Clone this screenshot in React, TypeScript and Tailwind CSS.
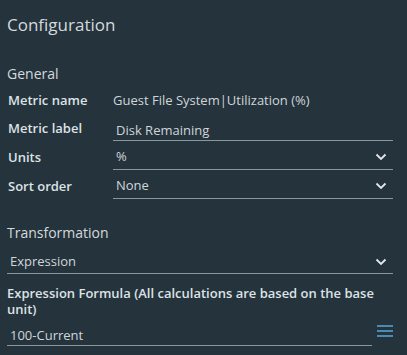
import React from "react";

const Chevron = () => (
    <svg width="12" height="8" viewBox="0 0 12 8" className="text-[#e3e7ea]">
        <path d="M1.5 1.5 L6 6 L10.5 1.5" fill="none" stroke="currentColor" strokeWidth="1.8" />
    </svg>
);

const Row = ({label, children, h = "h-[29px]"}: {label: string; children: React.ReactNode; h?: string}) => (
    <div className={"flex items-center " + h}>
        <div className="w-[105px] shrink-0 text-[13px] font-semibold text-[#dce2e6]">{label}</div>
        {children}
    </div>
);

const SelectBox = ({value, className = ""}: {value: string; className?: string}) => (
    <div className={"flex items-center justify-between h-[24px] border-b border-[#8b959c] pl-[3px] pr-[6px] " + className}>
        <span className="text-[13px] text-[#cfd6db]">{value}</span>
        <Chevron />
    </div>
);

const App = () => {
    return (
        <div
            className="w-[407px] h-[355px] bg-[#25333c] text-[#cfd6db] overflow-hidden pl-[7px] pr-[14px]"
            style={{fontFamily: '"Open Sans", "Liberation Sans", sans-serif'}}
        >
            <h1 className="pt-[13px] text-[17px] leading-[24px] text-[#d3dade]">Configuration</h1>

            <h2 className="mt-[27px] text-[14px] leading-[20px] text-[#d3dade]">General</h2>

            <div className="mt-[3px] pl-[1px]">
                <Row label="Metric name" h="h-[27px]">
                    <span className="text-[13px] text-[#cfd6db]">Guest File System|Utilization (%)</span>
                </Row>
                <Row label="Metric label">
                    <div className="flex-1 h-[24px] border-b border-[#8b959c] pl-[3px]">
                        <span className="text-[13px] text-[#cfd6db] leading-[22px]">Disk Remaining</span>
                    </div>
                </Row>
                <Row label="Units">
                    <SelectBox value="%" className="flex-1" />
                </Row>
                <Row label="Sort order">
                    <SelectBox value="None" className="flex-1" />
                </Row>
            </div>

            <h2 className="mt-[22px] text-[14px] leading-[20px] text-[#d3dade]">Transformation</h2>

            <SelectBox value="Expression" className="mt-[7px]" />

            <div className="mt-[11px] text-[13px] font-semibold leading-[16px] text-[#dce2e6]">
                Expression Formula (All calculations are based on the base unit)
            </div>

            <div className="mt-[5px] flex items-center gap-[5px]">
                <div className="flex-1 h-[24px] border-b border-[#8b959c] pl-[3px]">
                    <span className="text-[13px] text-[#cfd6db] leading-[24px]">100-Current</span>
                </div>
                <svg width="16" height="14" viewBox="0 0 16 14" className="text-[#4a8ab3] mb-[6px]">
                    <rect x="0" y="1" width="16" height="2" fill="currentColor" />
                    <rect x="0" y="6" width="16" height="2" fill="currentColor" />
                    <rect x="0" y="11" width="16" height="2" fill="currentColor" />
                </svg>
            </div>
        </div>
    );
};

export default App;
